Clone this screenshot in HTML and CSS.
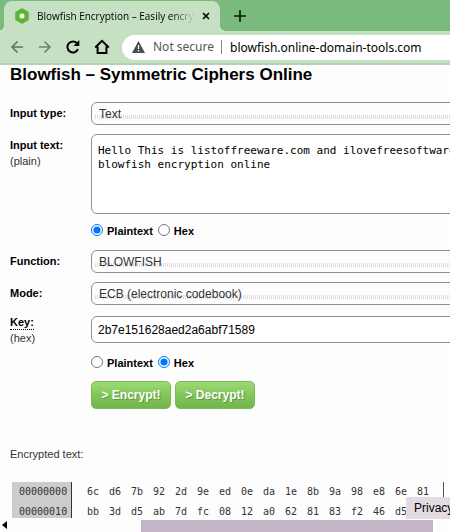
FILE: index.html
```html
<!DOCTYPE html>
<html lang="en">
<head>
  <meta charset="UTF-8">
  <meta name="viewport" content="width=device-width, initial-scale=1.0">
  <title>Blowfish Encryption – Easily encrypt</title>
  <link rel="stylesheet" href="styles.css">
</head>
<body>
  <!-- Browser bar -->
  <header class="browser">
    <div class="tab-strip">
      <div class="tab">
        <svg class="favicon" width="16" height="16" viewBox="0 0 16 16">
          <path d="M8 1l6 3.500v7L8 15l-6-3.500v-7z" fill="#5cb531" stroke="#5cb531" stroke-width="1.500" stroke-linejoin="round"/>
          <circle cx="8" cy="8" r="2.500" fill="#fff"/>
        </svg>
        <span class="tab-title">Blowfish Encryption – Easily encry</span>
        <button class="icon-button tab-close" aria-label="Close tab">
          <svg width="8" height="8" viewBox="0 0 8 8"><path d="M1 1l6 6M7 1l-6 6" stroke="#000" stroke-width="1.600"/></svg>
        </button>
      </div>
      <button class="icon-button" aria-label="New tab">
        <svg width="12" height="12" viewBox="0 0 12 12"><path d="M6 0v12M0 6h12" stroke="#111" stroke-width="1.600"/></svg>
      </button>
    </div>
    <div class="toolbar">
      <nav class="nav-buttons">
        <button class="icon-button" aria-label="Back">
          <svg width="14" height="14" viewBox="0 0 14 14"><path d="M13 7H2M7.500 1.500L2 7l5.500 5.500" fill="none" stroke="#63705f" stroke-width="1.600"/></svg>
        </button>
        <button class="icon-button" aria-label="Forward">
          <svg width="14" height="14" viewBox="0 0 14 14"><path d="M1 7h11M6.500 1.500L12 7l-5.500 5.500" fill="none" stroke="#718070" stroke-width="1.600"/></svg>
        </button>
        <button class="icon-button" aria-label="Reload">
          <svg width="14" height="14" viewBox="0 0 14 14"><path d="M12 9.200A5.500 5.500 0 1 1 11 3.200" fill="none" stroke="#000" stroke-width="2"/><path d="M13.300 0v6H7.500z" fill="#000"/></svg>
        </button>
        <button class="icon-button" aria-label="Home">
          <svg width="16" height="16" viewBox="0 0 16 16"><path d="M1.200 8.500L8 1.800l6.800 6.700M3.600 7.500v6.600h8.800V7.500" fill="none" stroke="#000" stroke-width="2"/></svg>
        </button>
      </nav>
      <div class="address">
        <svg width="13" height="12" viewBox="0 0 13 12"><path d="M6.500 0L13 12H0z" fill="#484b50"/><path d="M6.500 4v4M6.500 9v1.500" stroke="#fff" stroke-width="1.300"/></svg>
        <span class="security">Not secure</span>
        <span class="url">blowfish.online-domain-tools.com</span>
      </div>
    </div>
  </header>

  <main>
    <h1>Blowfish – Symmetric Ciphers Online</h1>

    <form class="cipher-form">
      <label class="name" for="input-type">Input type:</label>
      <select id="input-type">
        <option>Text</option>
        <option>File</option>
      </select>

      <label class="name" for="input-text">Input text: <small>(plain)</small></label>
      <div class="field">
        <textarea id="input-text" wrap="off" spellcheck="false">Hello This is listoffreeware.com and ilovefreesoftware
blowfish encryption online</textarea>
        <div class="formats">
          <input type="radio" name="text-format" id="text-plain" checked>
          <label for="text-plain">Plaintext</label>
          <input type="radio" name="text-format" id="text-hex">
          <label for="text-hex">Hex</label>
        </div>
      </div>

      <label class="name" for="function">Function:</label>
      <select id="function">
        <option>BLOWFISH</option>
      </select>

      <label class="name" for="mode">Mode:</label>
      <select id="mode">
        <option>ECB (electronic codebook)</option>
      </select>

      <label class="name key-name" for="key"><abbr>Key:</abbr> <small>(hex)</small></label>
      <div class="field key-field">
        <input type="text" id="key" value="2b7e151628aed2a6abf71589">
        <div class="formats">
          <input type="radio" name="key-format" id="key-plain">
          <label for="key-plain">Plaintext</label>
          <input type="radio" name="key-format" id="key-hex" checked>
          <label for="key-hex">Hex</label>
        </div>
        <div class="actions">
          <button type="button" class="action">&gt; Encrypt!</button>
          <button type="button" class="action">&gt; Decrypt!</button>
        </div>
      </div>
    </form>

    <p class="result-title">Encrypted text:</p>
    <table class="hexdump">
      <tbody>
        <tr>
          <th>00000000</th>
          <td>6c</td><td>d6</td><td>7b</td><td>92</td><td>2d</td><td>9e</td><td>ed</td><td>0e</td>
          <td>da</td><td>1e</td><td>8b</td><td>9a</td><td>98</td><td>e8</td><td>6e</td><td>81</td>
        </tr>
        <tr>
          <th>00000010</th>
          <td>bb</td><td>3d</td><td>d5</td><td>ab</td><td>7d</td><td>fc</td><td>08</td><td>12</td>
          <td>a0</td><td>62</td><td>81</td><td>83</td><td>f2</td><td>46</td><td>d5</td><td></td>
        </tr>
      </tbody>
    </table>
  </main>

  <footer class="scrollbar">
    <svg width="5" height="8" viewBox="0 0 5 8"><path d="M5 0v8L0 4z" fill="#000"/></svg>
    <div class="thumb"></div>
    <a class="privacy" href="#">Privacy</a>
  </footer>
</body>
</html>
```

FILE: styles.css
```css
body {
  margin: 0;
  height: 100vh;
  display: flex;
  flex-direction: column;
  overflow: hidden;
  background: #fdfdfd;
  color: #000;
  font-family: "Liberation Sans", Arial, sans-serif;
  font-size: 11px;
}

/* Browser bar */
.browser {
  font-family: "Noto Sans", sans-serif;
  font-size: 12px;
}

.icon-button {
  display: flex;
  padding: 0;
  border: 0;
  background: none;
}

.tab-strip {
  display: flex;
  align-items: center;
  gap: 14px;
  height: 31px;
  padding-left: 4px;
  background: #7aba7c;
}

.tab {
  position: relative;
  box-sizing: border-box;
  display: flex;
  align-items: center;
  gap: 7px;
  width: 216px;
  height: 30px;
  margin-top: 1px;
  padding: 0 10px;
  border-radius: 8px 8px 0 0;
  background: #c6e0c4;
}

/* flared feet of the active tab */
.tab::before,
.tab::after {
  content: "";
  position: absolute;
  bottom: 0;
  width: 6px;
  height: 6px;
}

.tab::before {
  right: 100%;
  background: radial-gradient(circle at 0 0, transparent 6px, #c6e0c4 6px);
}

.tab::after {
  left: 100%;
  background: radial-gradient(circle at 100% 0, transparent 6px, #c6e0c4 6px);
}

.tab-title {
  flex: 1;
  overflow: hidden;
  white-space: nowrap;
  color: #000;
  font-family: "Open Sans", sans-serif;
  font-size: 10px;
  -webkit-mask-image: linear-gradient(to right, #000 85%, transparent);
  mask-image: linear-gradient(to right, #000 85%, transparent);
}

.toolbar {
  display: flex;
  align-items: center;
  gap: 12px;
  height: 32px;
  padding-left: 10px;
  border-bottom: 2px solid #b2d2b2;
  background: #c6e0c4;
}

.nav-buttons {
  display: flex;
  align-items: center;
  gap: 14px;
}

.address {
  flex: 1;
  display: flex;
  align-items: center;
  height: 25px;
  padding-left: 10px;
  border-radius: 13px 0 0 13px;
  background: #fff;
  white-space: nowrap;
}

.security {
  margin-left: 8px;
  padding-right: 7px;
  border-right: 1px solid #888;
  color: #555;
  line-height: 14px;
}

.url {
  margin-left: 8px;
}

/* Page */
main {
  flex: 1;
  min-height: 0;
  overflow: hidden;
  padding-left: 10px;
}

h1 {
  margin: 0 0 17px;
  font-size: 17px;
  line-height: 20px;
}

/* the fields run on past the right edge of the window */
.cipher-form {
  display: grid;
  grid-template-columns: 81px 1fr;
  row-gap: 9px;
  margin-right: -40px;
}

.name,
.formats {
  font-weight: bold;
}

.name {
  padding-top: 3px;
  line-height: 16px;
}

.name small {
  display: block;
  font-size: 11px;
  font-weight: normal;
  color: #333;
}

.name abbr {
  padding-bottom: 1px;
  border-bottom: 1px dotted #000;
}

.key-name {
  padding-top: 0;
}

select,
textarea,
input[type="text"] {
  box-sizing: border-box;
  display: block;
  width: 100%;
  margin: 0;
  border: 1px solid #948c96;
  border-radius: 6px;
  color: #000;
}

select {
  appearance: none;
  height: 23px;
  padding: 0 7px;
  background: repeating-linear-gradient(to right, #e2dce2 0 1px, #fdfdfd 1px 2px) 3px 12px / 100% 4px no-repeat #fdfdfd;
  color: #333;
  font: 12px "Liberation Sans", Arial, sans-serif;
}

textarea {
  height: 80px;
  padding: 9px 6px;
  overflow: hidden;
  resize: none;
  background: #fff;
  font: 11px/14px "DejaVu Sans Mono", monospace;
}

input[type="text"] {
  height: 27px;
  padding: 0 6px;
  background: #fff;
  font: 12px "Liberation Sans", Arial, sans-serif;
}

.formats {
  display: flex;
  align-items: center;
  height: 20px;
  margin-top: 7px;
}

.formats input {
  width: 12px;
  height: 12px;
  margin: 0 4px 2px 0;
}

.formats label {
  margin-right: 5px;
}

.key-field {
  padding-top: 2px;
}

.key-field .formats {
  margin-top: 10px;
}

.actions {
  display: flex;
  gap: 4px;
  margin-top: 8px;
}

.action {
  width: 80px;
  height: 28px;
  padding: 0;
  border: 1px solid #7abb55;
  border-radius: 5px;
  background: linear-gradient(#9bdb74, #83c75b 50%, #71b54b);
  color: #fff;
  font: bold 12px "Liberation Sans", Arial, sans-serif;
  text-shadow: 1px 1px 1px #5c9440;
}

.result-title {
  margin: 37px 0 20px;
  color: #333;
  line-height: 16px;
}

.hexdump {
  margin-left: 2px;
  border-spacing: 0;
  color: #333;
  font: 10px/20px "DejaVu Sans Mono", monospace;
}

.hexdump th,
.hexdump td {
  padding: 0;
  font-weight: normal;
  text-align: left;
}

.hexdump th {
  width: 52px;
  padding-left: 7px;
  border-right: 1px solid #333;
  background: #ccc;
}

.hexdump td {
  min-width: 22px;
}

.hexdump th + td {
  padding-left: 15px;
}

.hexdump td:last-child {
  min-width: 26px;
  border-right: 1px solid #555;
}

/* Bottom scrollbar */
.scrollbar {
  position: relative;
  display: flex;
  align-items: center;
  height: 14px;
  padding-left: 2px;
  background: #fdfdfd;
}

.thumb {
  align-self: flex-end;
  width: 65%;
  height: 12px;
  margin-left: 30%;
  background: #c3b5c7;
}

.privacy {
  position: absolute;
  right: 0;
  bottom: 13px;
  width: 36px;
  padding-left: 8px;
  background: #e2dce2;
  color: #000;
  font-size: 12px;
  line-height: 22px;
  text-decoration: none;
}
```
